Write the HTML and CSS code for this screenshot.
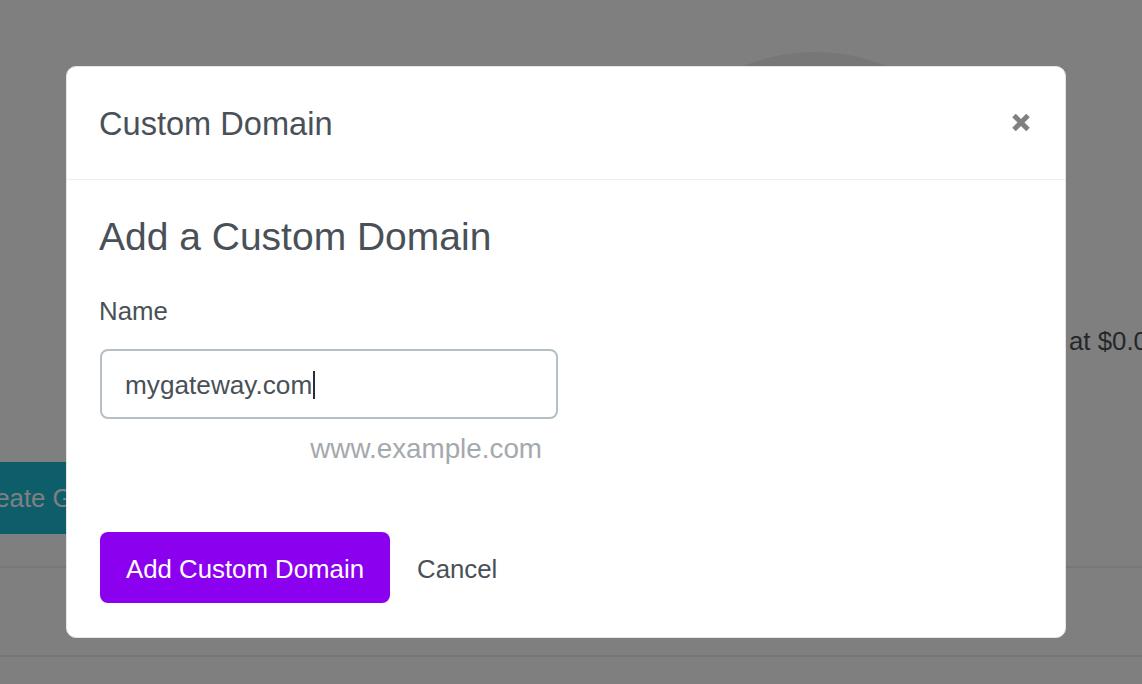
FILE: index.html
```html
<!DOCTYPE html>
<html lang="en">
<head>
<meta charset="utf-8">
<title>Custom Domain</title>
<link rel="stylesheet" href="styles.css">
</head>
<body>
<div class="page">
  <div class="hero-row">
    <div class="circle"></div>
  </div>
  <p class="price">at $0.05 per hour</p>
  <div class="action-row">
    <button class="create-btn">Create Gateway</button>
  </div>
  <div class="rule rule-1"></div>
  <div class="rule rule-2"></div>
</div>

<div class="backdrop">
  <div class="modal">
    <div class="modal-header">
      <h5 class="modal-title">Custom Domain</h5>
      <button class="close" aria-label="Close">
        <svg width="20" height="21" viewBox="0 0 20 21"><path d="M3 3.5 L17 17.5 M17 3.5 L3 17.5" stroke="#808080" stroke-width="5" stroke-linecap="butt"/></svg>
      </button>
    </div>
    <div class="modal-body">
      <h4 class="heading">Add a Custom Domain</h4>
      <div class="form-group">
        <label class="label">Name</label>
        <div class="input"><span class="value">mygateway.com</span><span class="caret"></span></div>
        <div class="help">www.example.com</div>
      </div>
      <div class="actions">
        <button class="btn btn-primary">Add Custom Domain</button>
        <button class="btn btn-link">Cancel</button>
      </div>
    </div>
  </div>
</div>
</body>
</html>
```

FILE: styles.css
```css
html, body {
  margin: 0;
  padding: 0;
  width: 1142px;
  height: 684px;
  overflow: hidden;
  background: #ffffff;
  font-family: "Liberation Sans", Arial, sans-serif;
}

.page {
  padding-top: 52px;
  width: 1142px;
}

.hero-row {
  display: flex;
  height: 270px;
}

.circle {
  flex: none;
  width: 384px;
  height: 384px;
  margin-left: 623px;
  border-radius: 50%;
  background: #eeeeee;
}

.price {
  margin: 0 0 0 1069px;
  white-space: nowrap;
  font-size: 25.8px;
  line-height: 38px;
  color: #4a4f55;
}

.action-row {
  display: flex;
  margin-top: 102px;
}

.create-btn {
  margin-left: -58px;
  height: 72px;
  padding: 0 26px;
  border: none;
  background: #1abcd4;
  color: #ffffff;
  font-family: inherit;
  font-size: 25.8px;
  white-space: nowrap;
}

.rule {
  height: 2px;
  background: #eeeeee;
}

.rule-1 {
  margin-top: 32px;
}

.rule-2 {
  margin-top: 87px;
}

.backdrop {
  position: fixed;
  inset: 0;
  background: rgba(0, 0, 0, 0.5);
}

.modal {
  position: absolute;
  left: 66px;
  top: 66px;
  width: 1000px;
  height: 572px;
  box-sizing: border-box;
  background: #ffffff;
  border: 1.5px solid #e4e4e4;
  border-radius: 10px;
  color: #495057;
}

.modal-header {
  display: flex;
  align-items: center;
  justify-content: space-between;
  padding: 33px 34px 31px 32px;
  border-bottom: 1.5px solid #eceef0;
}

.modal-title {
  margin: 0;
  font-size: 32.6px;
  font-weight: 400;
  line-height: 48px;
  color: #495057;
}

.close {
  display: flex;
  padding: 0;
  border: none;
  background: none;
  margin-top: -3px;
}

.modal-body {
  padding: 34px 32px 33px 32px;
}

.heading {
  margin: 0 0 32px;
  font-size: 39px;
  font-weight: 400;
  line-height: 46px;
  color: #495057;
}

.form-group {
  width: 458px;
  margin-left: 1px;
  display: flex;
  flex-direction: column;
}

.label {
  margin-left: -1px;
  font-size: 25.8px;
  line-height: 38px;
  color: #495057;
}

.input {
  margin-top: 19px;
  height: 70px;
  box-sizing: border-box;
  border: 2px solid #b6bec6;
  border-radius: 8px;
  display: flex;
  align-items: center;
  padding: 2px 0 0 23px;
  font-size: 26.2px;
  color: #495057;
}

.caret {
  width: 2px;
  height: 28px;
  margin-left: 1px;
  background: #2b2f33;
}

.help {
  margin-top: 10px;
  padding-right: 16px;
  text-align: right;
  font-size: 27.8px;
  line-height: 40px;
  color: #a4a9ae;
}

.actions {
  display: flex;
  margin-top: 63px;
}

.btn {
  height: 71px;
  padding: 2px 26px 0;
  border: none;
  border-radius: 8px;
  font-family: inherit;
  font-size: 25.8px;
  line-height: 38px;
  white-space: nowrap;
}

.btn-primary {
  margin-left: 1px;
  background: #8c00f0;
  color: #ffffff;
}

.btn-link {
  margin-left: 1px;
  background: none;
  color: #495057;
}
```
